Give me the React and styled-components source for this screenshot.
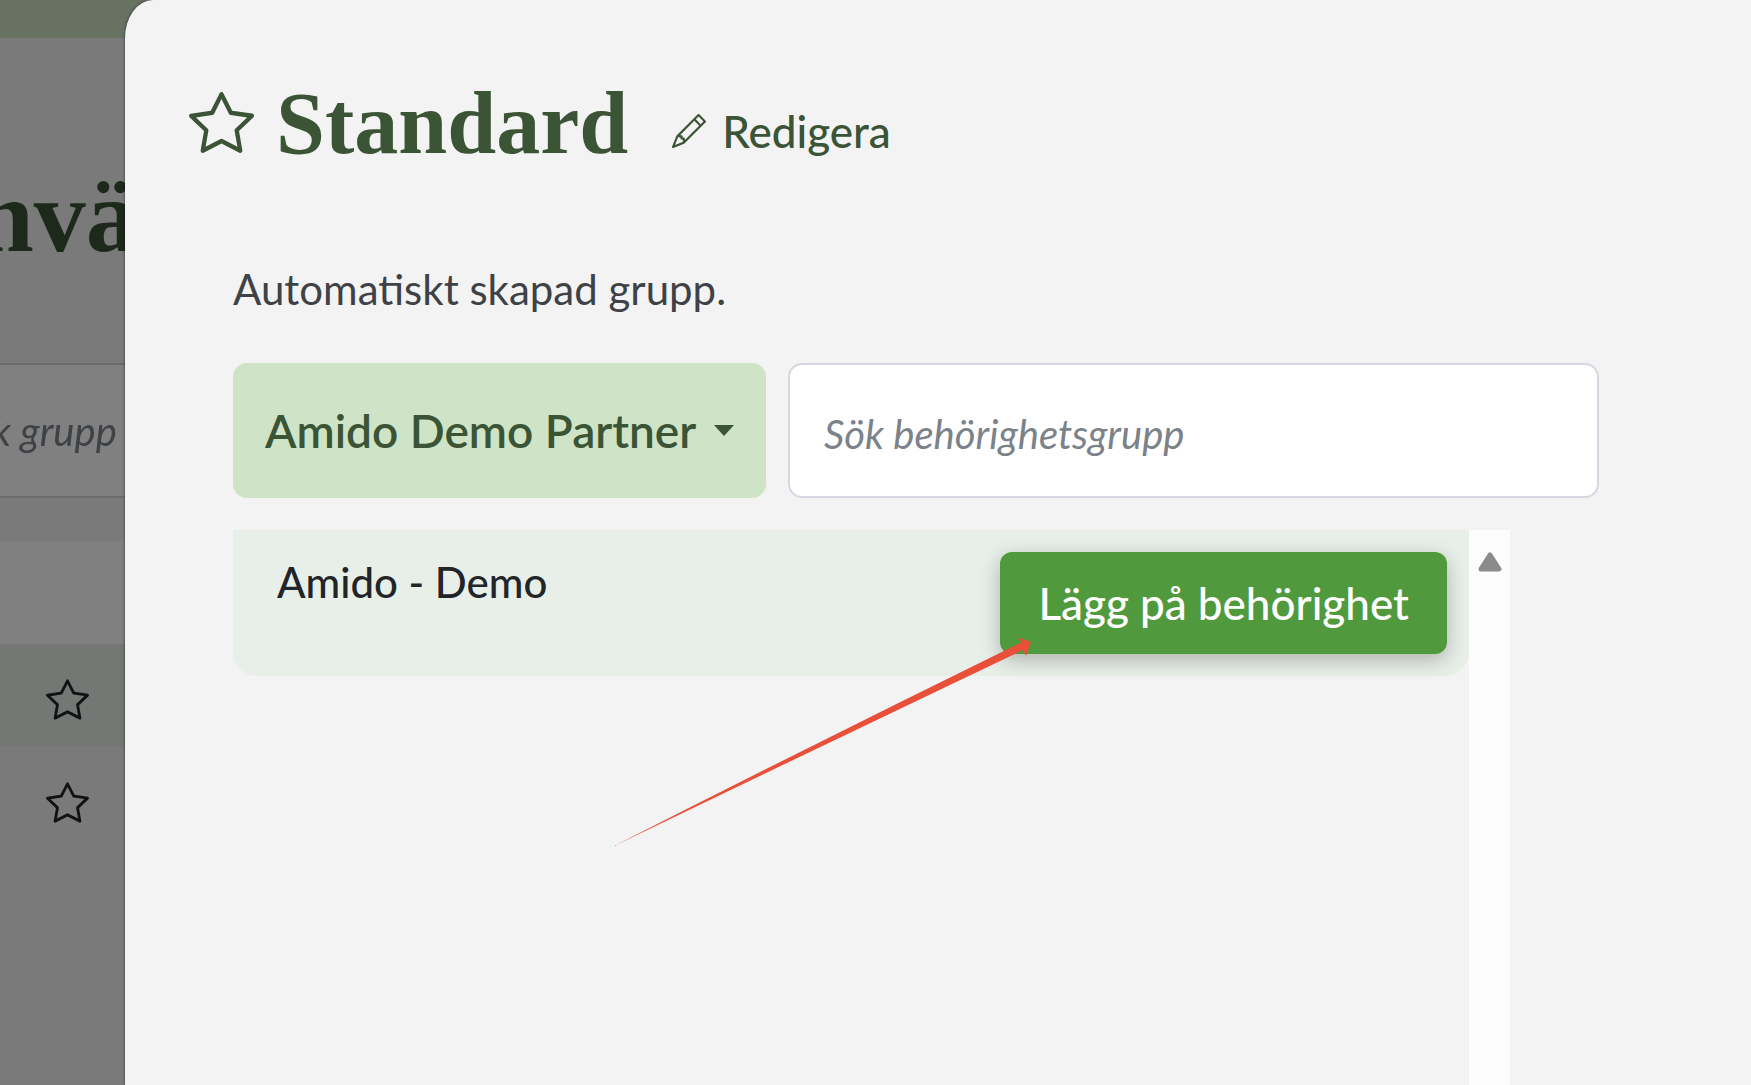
import styled, { createGlobalStyle } from "styled-components";
import { BsPencil, BsStar } from "react-icons/bs";

// Global styles for the app
const GlobalStyle = createGlobalStyle`
  * {
    box-sizing: border-box;
    margin: 0;
    padding: 0;
  }
  body {
    background-color: #f3f3f3;
    color: #212529;
    font-family: Lato, sans-serif;
    overflow: hidden;
  }
  button, input, select {
    font-family: inherit;
  }
`;

const groups = [
  { id: 1, striped: true },
  { id: 2, striped: false },
];

const permissions = [{ id: 1, name: "Amido - Demo" }];

// Main App Component
const App = () => {
  return (
    <>
      <GlobalStyle />
      <Layout>
        <Backdrop>
          <TopBar />
          <PageTitle>nvä</PageTitle>
          <PageSearch type="text" placeholder="k grupp" aria-label="Sök grupp" />
          <GroupList>
            <GroupRow $background="#ffffff" />
            {groups.map((group) => (
              <GroupRow
                key={group.id}
                $background={group.striped ? "#e8eee8" : "transparent"}
              >
                <BsStar size={43} />
              </GroupRow>
            ))}
          </GroupList>
        </Backdrop>
        <Drawer>
          <DrawerHeader>
            <TitleStar />
            <Title>Standard</Title>
            <EditButton type="button">
              <BsPencil size={34} />
              Redigera
            </EditButton>
          </DrawerHeader>
          <Content>
            <Description>Automatiskt skapad grupp.</Description>
            <Filters>
              <PartnerField>
                <PartnerSelect aria-label="Partner">
                  <option>Amido Demo Partner</option>
                </PartnerSelect>
                <Caret viewBox="0 0 20 11">
                  <path d="M0 0h20L10 11z" />
                </Caret>
              </PartnerField>
              <Search
                type="text"
                placeholder="Sök behörighetsgrupp"
                aria-label="Sök behörighetsgrupp"
              />
            </Filters>
            <ListArea>
              <List>
                {permissions.map((item) => (
                  <PermissionRow key={item.id}>
                    <PermissionName>{item.name}</PermissionName>
                    <AddButton type="button">Lägg på behörighet</AddButton>
                  </PermissionRow>
                ))}
              </List>
              <ScrollTrack>
                <svg width="26" height="20" viewBox="0 0 26 20">
                  <path
                    d="M13 3 22 17H4z"
                    fill="#8b8b8b"
                    stroke="#8b8b8b"
                    strokeWidth="5"
                    strokeLinejoin="round"
                  />
                </svg>
              </ScrollTrack>
            </ListArea>
          </Content>
          <Arrow viewBox="0 0 418 212">
            <path
              d="M0 210 Q200 108 408 6 L403 1 L417 6 L412 20 L409 14 Q210 109 0 210z"
              fill="#e8503a"
            />
          </Arrow>
        </Drawer>
      </Layout>
    </>
  );
};

export default App;

// Styled Components
const Layout = styled.div`
  display: grid;
  grid-template-columns: 125px minmax(0, 1fr);
  height: 100vh;
`;

// The page behind the drawer, dimmed to half brightness
const Backdrop = styled.div`
  grid-row: 1;
  grid-column: 1 / -1;
  display: flex;
  flex-direction: column;
  min-width: 0;
  overflow: hidden;
  background-color: #f3f3f3;
  filter: brightness(0.5);
`;

const TopBar = styled.div`
  flex: none;
  height: 38px;
  background-color: #cfe3c6;
`;

const PageTitle = styled.h1`
  margin: 122px 0 0 -24px;
  font-family: "Liberation Serif", serif;
  font-size: 104px;
  line-height: 112px;
  color: #3a5435;
`;

const PageSearch = styled.input`
  width: 240px;
  height: 135px;
  margin-top: 91px;
  margin-left: -10px;
  border: 2px solid #d5d8e0;
  background-color: #ffffff;
  font-size: 40px;
  font-style: italic;

  &::placeholder {
    color: #7c828a;
  }
`;

const GroupList = styled.div`
  margin-top: 43px;
`;

const GroupRow = styled.div`
  display: flex;
  align-items: center;
  height: 103px;
  padding: 8px 0 0 46px;
  background-color: ${(props) => props.$background};
`;

const Drawer = styled.main`
  grid-row: 1;
  grid-column: 2;
  position: relative;
  min-width: 0;
  padding: 76px 152px 0 64px;
  border-top-left-radius: 28px 38px;
  background-color: #f3f3f3;
  box-shadow: 0 0 3px rgba(0, 0, 0, 0.6);
  display: flex;
  flex-direction: column;
`;

const DrawerHeader = styled.header`
  display: flex;
  align-items: center;
  color: #3a5435;
`;

const TitleStar = styled(BsStar)`
  width: 65px;
  height: 65px;
  margin-bottom: 4px;
`;

const Title = styled.h2`
  margin: 0 44px 0 22px;
  font-family: "Liberation Serif", serif;
  font-size: 88px;
  line-height: 96px;
`;

const EditButton = styled.button`
  display: flex;
  align-items: center;
  gap: 16px;
  margin-top: 14px;
  border: none;
  background: none;
  color: #3a5435;
  font-size: 44px;
  font-weight: 500;
  line-height: 48px;
`;

const Content = styled.section`
  display: flex;
  flex: 1;
  flex-direction: column;
  padding: 93px 0 0 44px;
`;

const Description = styled.p`
  font-size: 42px;
  line-height: 48px;
  color: #3e4246;
`;

const Filters = styled.div`
  display: grid;
  grid-template-columns: 533px minmax(0, 1fr);
  gap: 22px;
  margin: 50px 0 32px;
`;

const PartnerField = styled.div`
  position: relative;
`;

const PartnerSelect = styled.select`
  appearance: none;
  display: block;
  width: 100%;
  height: 135px;
  padding: 0 32px;
  border: none;
  border-radius: 14px;
  background-color: #cfe3c6;
  color: #3a5435;
  font-size: 46px;
  font-weight: 600;
`;

const Caret = styled.svg`
  position: absolute;
  top: 62px;
  right: 32px;
  width: 20px;
  height: 11px;
  fill: #3a5435;
  pointer-events: none;
`;

const Search = styled.input`
  width: 100%;
  height: 135px;
  padding: 6px 34px 0;
  border: 2px solid #d5d8e0;
  border-radius: 14px;
  background-color: #ffffff;
  font-size: 40px;
  font-style: italic;

  &::placeholder {
    color: #7c828a;
  }
`;

const ListArea = styled.div`
  display: flex;
  flex: 1;
  margin-right: 89px;
`;

const List = styled.ul`
  flex: 1;
  list-style: none;
`;

const PermissionRow = styled.li`
  display: flex;
  justify-content: space-between;
  align-items: flex-start;
  padding: 22px 22px 22px 44px;
  border-radius: 0 0 24px 24px;
  background-color: #e8eee8;
`;

const PermissionName = styled.span`
  padding-top: 6px;
  font-size: 42px;
  font-weight: 500;
  line-height: 48px;
`;

const AddButton = styled.button`
  height: 102px;
  padding: 0 38px;
  border: none;
  border-radius: 12px;
  background-color: #50993c;
  box-shadow: 0 6px 20px rgba(0, 0, 0, 0.25);
  color: #ffffff;
  font-size: 44px;
  font-weight: 500;
`;

const ScrollTrack = styled.div`
  display: flex;
  justify-content: center;
  width: 41px;
  padding-top: 22px;
  background-color: #fcfcfc;
`;

// Pointer drawn over the list towards the add button
const Arrow = styled.svg`
  position: absolute;
  top: 636px;
  left: 489px;
  width: 418px;
  height: 212px;
  pointer-events: none;
`;
